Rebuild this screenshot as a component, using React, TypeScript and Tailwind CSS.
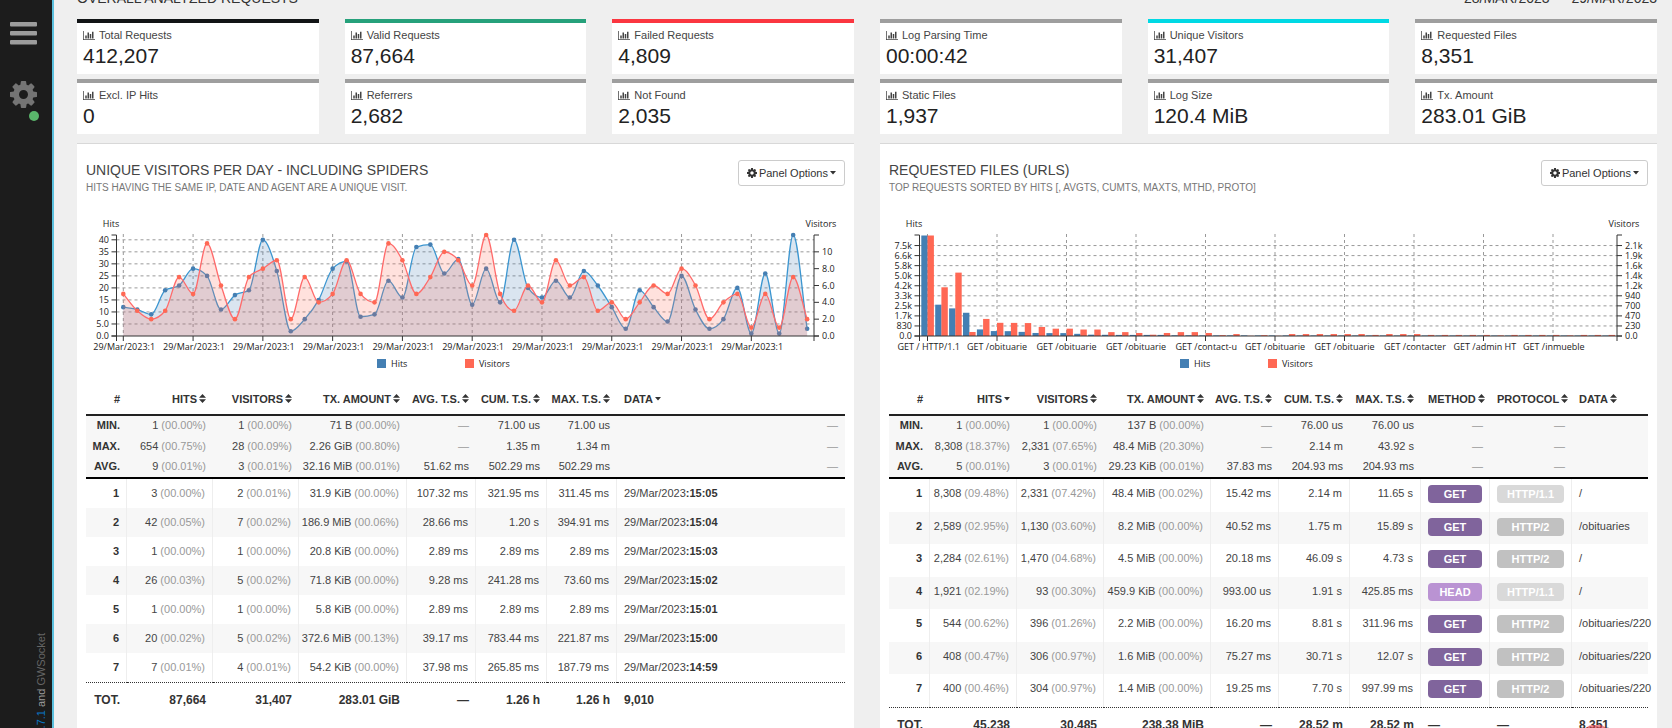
import type { ReactNode } from "react";

const COG =
  "M1152 896q0-106-75-181t-181-75-181 75-75 181 75 181 181 75 181-75 75-181zm512-109v222q0 12-8 23t-20 13l-185 28q-19 54-39 91 35 50 107 138 10 12 10 25t-9 23q-27 37-99 108t-94 71q-12 0-26-9l-138-108q-44 23-91 38-16 136-29 186-7 28-36 28h-222q-14 0-24.5-8.5t-11.5-21.5l-28-184q-49-16-90-37l-141 107q-10 9-25 9-14 0-25-11-126-114-165-168-7-10-7-23 0-12 8-23 15-21 51-66.5t54-70.5q-27-50-41-99l-183-27q-13-2-21-12.5t-8-23.5v-222q0-12 8-23t19-13l186-28q14-46 39-92-40-57-107-138-10-12-10-24 0-10 9-23 26-36 98.5-107.5t94.5-71.5q13 0 26 10l138 107q44-23 91-38 16-136 29-186 7-28 36-28h222q14 0 24.5 8.5t11.5 21.5l28 184q49 16 90 37l142-107q9-9 24-9 13 0 25 10 129 119 165 170 7 8 7 22 0 12-8 23-15 21-51 66.5t-54 70.5q26 50 41 98l183 28q13 2 21 12.5t8 23.5z";

const CogIcon = ({ className }: { className: string }) => (
  <svg viewBox="128 128 1536 1536" className={className} fill="currentColor" aria-hidden="true">
    <path d={COG} />
  </svg>
);

const ChartIcon = () => (
  <svg viewBox="0 0 2048 1792" className="w-3 h-[11px] shrink-0" fill="currentColor" aria-hidden="true">
    <path d="M640 896v512h-256v-512h256zm384-512v1024h-256v-1024h256zm1024 1152v128h-2048v-1536h128v1408h1920zm-640-896v768h-256v-768h256zm384-384v1152h-256v-1152h256z" />
  </svg>
);

const CaretIcon = () => (
  <svg viewBox="0 0 6 4" className="w-[6px] h-1" fill="currentColor" aria-hidden="true">
    <path d="M0 0h6L3 3.5z" />
  </svg>
);

const SortIcon = () => (
  <svg viewBox="0 0 7 9" className="w-[7px] h-[9px]" fill="currentColor" aria-hidden="true">
    <path d="M3.5 0L7 3.8H0zM0 5.2h7L3.5 9z" />
  </svg>
);

const Sidebar = () => (
  <nav className="flex flex-col items-center w-[54px] shrink-0 h-full bg-[#1c1c1c] border-r-2 border-[#5bc0de] overflow-hidden">
    <button type="button" aria-label="Menu" className="mt-[22px] mr-[5px] text-[#9c9c9c]">
      <svg viewBox="0 0 27 23" className="w-[27px] h-[23px]" fill="currentColor">
        <rect width="27" height="4.6" rx="1" />
        <rect y="9" width="27" height="4.6" rx="1" />
        <rect y="18" width="27" height="4.6" rx="1" />
      </svg>
    </button>
    <button type="button" aria-label="Settings" className="relative mt-9 mr-[5px] text-[#747474]">
      <CogIcon className="w-[27px] h-[27px]" />
      <span className="absolute -right-[2px] -bottom-[13px] size-[10px] rounded-full bg-[#5ab66b]" />
    </button>
    <p className="mt-auto -mb-20 ml-[29px] text-[11px] leading-4 text-[#999] whitespace-nowrap [writing-mode:vertical-rl] rotate-180">
      by <a href="#goaccess" className="text-[#0a76c4]">GoAccess v1.7.1</a> and{" "}
      <a href="#gwsocket" className="text-[#666]">GWSocket</a>
    </p>
  </nav>
);

const stats = [
  { label: "Total Requests", value: "412,207", border: "border-[#111416]" },
  { label: "Valid Requests", value: "87,664", border: "border-[#26a17b]" },
  { label: "Failed Requests", value: "4,809", border: "border-[#fb3640]" },
  { label: "Log Parsing Time", value: "00:00:42", border: "border-[#9e9e9e]" },
  { label: "Unique Visitors", value: "31,407", border: "border-[#00d9e4]" },
  { label: "Requested Files", value: "8,351", border: "border-[#9e9e9e]" },
  { label: "Excl. IP Hits", value: "0", border: "border-[#9e9e9e]" },
  { label: "Referrers", value: "2,682", border: "border-[#9e9e9e]" },
  { label: "Not Found", value: "2,035", border: "border-[#9e9e9e]" },
  { label: "Static Files", value: "1,937", border: "border-[#9e9e9e]" },
  { label: "Log Size", value: "120.4 MiB", border: "border-[#9e9e9e]" },
  { label: "Tx. Amount", value: "283.01 GiB", border: "border-[#9e9e9e]" },
];

const StatCard = ({ label, value, border }: { label: string; value: string; border: string }) => (
  <div className={`bg-white border-t-4 px-[6px] pt-1 pb-[6px] ${border}`}>
    <h3 className="flex items-center gap-1 text-[11px] leading-4 text-[#444]">
      <ChartIcon />
      {label}
    </h3>
    <p className="pt-px text-[21px] leading-6 text-[#222]">{value}</p>
  </div>
);

// chart geometry, in viewBox units
const LEFT = 39.5;
const RIGHT = 737;
const TOP = 39;
const BOTTOM = 140;
const BLUE = "#447fb3";
const RED = "#ff6854";

type Tick = [number, string];

interface ChartProps {
  label: string;
  first: number;
  step: number;
  leftTicks: Tick[];
  rightTicks: Tick[];
  xLabels: string[];
  grid: number[];
  children: ReactNode;
}

const Chart = ({ label, first, step, leftTicks, rightTicks, xLabels, grid, children }: ChartProps) => (
  <svg
    viewBox="0 0 777 187"
    role="img"
    aria-label={label}
    className="block w-full h-auto text-[9px] font-['Open_Sans',sans-serif]"
    fill="#222"
  >
    <g stroke="#999" strokeDasharray="3 3">
      {grid.map((y) => (
        <line key={y} x1={LEFT} x2={RIGHT} y1={y} y2={y} />
      ))}
      {xLabels.map((_, i) => (
        <line key={i} x1={first + i * 5 * step} x2={first + i * 5 * step} y1={TOP - 1} y2={BOTTOM} />
      ))}
    </g>
    {children}
    <g stroke="#333" fill="none">
      <path d={`M${LEFT - 5} ${TOP}H${LEFT}V${BOTTOM}H${LEFT - 5}`} />
      <path d={`M${RIGHT + 5} ${TOP}H${RIGHT}V${BOTTOM}H${RIGHT + 5}`} />
      <path d={`M${LEFT} ${BOTTOM + 5}V${BOTTOM}H${RIGHT}V${BOTTOM + 5}`} />
      {leftTicks.map(([y]) => (
        <line key={y} x1={LEFT - 5} x2={LEFT} y1={y} y2={y} />
      ))}
      {rightTicks.map(([y]) => (
        <line key={y} x1={RIGHT} x2={RIGHT + 5} y1={y} y2={y} />
      ))}
      {xLabels.map((_, i) => (
        <line key={i} x1={first + i * 5 * step} x2={first + i * 5 * step} y1={BOTTOM} y2={BOTTOM + 5} />
      ))}
    </g>
    {leftTicks.map(([y, t]) => (
      <text key={y} x="32" y={y + 3} textAnchor="end">{t}</text>
    ))}
    {rightTicks.map(([y, t]) => (
      <text key={y} x={RIGHT + 8} y={y + 3}>{t}</text>
    ))}
    {xLabels.map((t, i) => (
      <text key={i} x={first + i * 5 * step - 30} y="154">{t}</text>
    ))}
    <text x="34" y="31" textAnchor="middle">Hits</text>
    <text x="744" y="31" textAnchor="middle">Visitors</text>
    <rect x="300" y="163" width="9" height="9" fill={BLUE} />
    <text x="314" y="171">Hits</text>
    <rect x="388" y="163" width="9" height="9" fill={RED} />
    <text x="402" y="171">Visitors</text>
  </svg>
);

const dayHits = [
  12, 11, 9, 19, 21, 28, 25, 11, 17, 19, 40, 27, 2, 7, 15, 28, 31, 8, 9, 23, 16, 37, 38, 26, 32,
  13, 28, 14, 40, 20, 16, 23, 16, 27, 21, 12, 3, 19, 12, 6, 25, 11, 3, 7, 20, 1, 26, 1, 42, 3,
];
const dayVisitors = [
  5, 3, 2, 3, 7, 5, 11, 6, 2, 7, 8, 9, 2, 7, 4, 5, 9, 5, 4, 11, 9, 5, 7, 10, 9,
  6, 12, 5, 3, 6, 4, 9, 6, 7, 3, 4, 2, 4, 6, 5, 8, 6, 2, 4, 5, 1, 5, 1, 7, 2,
];

// monotone cubic through the points, same slope rule as d3's curveMonotoneX
const curve = (pts: number[][]) => {
  const d = pts.slice(1).map((p, i) => (p[1] - pts[i][1]) / (p[0] - pts[i][0]));
  const m = pts.map((_, i) => {
    if (i === 0) return d[0];
    if (i === pts.length - 1) return d[i - 1];
    const [a, b] = [d[i - 1], d[i]];
    return (Math.sign(a) + Math.sign(b)) * Math.min(Math.abs(a), Math.abs(b), Math.abs(a + b) / 4);
  });
  let path = `M${pts[0][0]} ${pts[0][1]}`;
  for (let i = 1; i < pts.length; i++) {
    const [x0, y0] = pts[i - 1];
    const [x1, y1] = pts[i];
    const dx = (x1 - x0) / 3;
    path += `C${x0 + dx} ${y0 + dx * m[i - 1]} ${x1 - dx} ${y1 - dx * m[i]} ${x1} ${y1}`;
  }
  return path;
};

const Series = ({ data, max, line, dot }: { data: number[]; max: number; line: string; dot: string }) => {
  const pts = data.map((v, i) => [46.3 + i * 13.956, BOTTOM - (v / max) * (BOTTOM - TOP)]);
  const path = curve(pts);
  return (
    <g>
      <path d={`${path}V${BOTTOM}H46.3Z`} fill={dot} fillOpacity="0.2" />
      <path d={path} fill="none" stroke={line} strokeWidth="1.3" />
      {pts.map(([x, y]) => (
        <circle key={x} cx={x} cy={y} r="2.3" fill={dot} />
      ))}
    </g>
  );
};

const dayY = (v: number) => BOTTOM - (v / 42) * (BOTTOM - TOP);

const VisitorsChart = () => (
  <Chart
    label="Unique visitors per day"
    first={46.3}
    step={13.956}
    grid={[5, 10, 15, 20, 25, 30, 35, 40].map(dayY)}
    leftTicks={["0.0", "5.0", "10", "15", "20", "25", "30", "35", "40"].map((t, i): Tick => [dayY(i * 5), t])}
    rightTicks={["0.0", "2.0", "4.0", "6.0", "8.0", "10"].map((t, i): Tick => [dayY(i * 7), t])}
    xLabels={Array(10).fill("29/Mar/2023:1")}
  >
    <Series data={dayHits} max={42} line="#3c96d0" dot={BLUE} />
    <Series data={dayVisitors} max={12} line="#ff6b6b" dot={RED} />
  </Chart>
);

const fileHits = [
  8308, 2589, 2284, 1921, 544, 408, 400, 340, 250, 240, 240, 180, 110, 100, 90, 90, 90, 90, 60, 60,
  50, 50, 50, 50, 45, 45, 45, 45, 45, 45, 45, 45, 45, 40, 40, 40, 40, 40, 40, 40, 40, 40, 40, 40,
  40, 40, 40, 40, 40, 40,
];
const fileVisitors = [
  2331, 1130, 1470, 93, 396, 306, 304, 300, 210, 170, 170, 150, 150, 90, 90, 70, 30, 70, 90, 90,
  70, 20, 45, 5, 20, 5, 45, 45, 45, 45, 45, 45, 25, 45, 45, 45, 25, 25, 25, 25, 25, 15, 25, 25,
  25, 25, 15, 25, 25, 25,
];

const fileLevel = (i: number) => BOTTOM - i * 10.05;

const FilesChart = () => (
  <Chart
    label="Requested files"
    first={47.5}
    step={13.9}
    grid={[1, 2, 3, 4, 5, 6, 7, 8, 9].map(fileLevel)}
    leftTicks={["0.0", "830", "1.7k", "2.5k", "3.3k", "4.2k", "5.0k", "5.8k", "6.6k", "7.5k"].map((t, i): Tick => [fileLevel(i), t])}
    rightTicks={["0.0", "230", "470", "700", "940", "1.2k", "1.4k", "1.6k", "1.9k", "2.1k"].map((t, i): Tick => [fileLevel(i), t])}
    xLabels={[
      "GET / HTTP/1.1", "GET /obituarie", "GET /obituarie", "GET /obituarie", "GET /contact-u",
      "GET /obituarie", "GET /obituarie", "GET /contacter", "GET /admin HT", "GET /inmueble",
    ]}
  >
    {fileHits.map((v, i) => {
      const x = 47.5 + i * 13.9;
      const h = (v / 8308) * 100.5;
      const r = (fileVisitors[i] / 2331) * 100.5;
      return (
        <g key={i}>
          <rect x={x - 6.2} y={BOTTOM - h} width="6.4" height={h} fill={BLUE} />
          <rect x={x} y={BOTTOM - r} width="6.4" height={r} fill={RED} />
        </g>
      );
    })}
  </Chart>
);

const Value = ({ text }: { text: string }) => {
  if (text === "—") return <span className="text-[#999]">—</span>;
  const at = text.indexOf(" (");
  if (at < 0) return <>{text}</>;
  return (
    <>
      {text.slice(0, at)} <span className="text-[#999]">{text.slice(at + 1)}</span>
    </>
  );
};

const badges: Record<string, string> = {
  GET: "bg-[#80649c]",
  HEAD: "bg-[#ba93d3]",
  "HTTP/1.1": "bg-[#d9d9d9]",
  "HTTP/2": "bg-[#c1c1c1]",
};

const Badge = ({ text }: { text: string }) => (
  <span className={`block mt-px rounded-[4px] text-center text-[11px] leading-[18px] font-bold text-white ${badges[text]}`}>
    {text}
  </span>
);

interface Column {
  name: string;
  width: string;
  left?: boolean;
  sorted?: boolean;
}

interface TableProps {
  columns: Column[];
  summary: string[][];
  rows: string[][];
  totals: string[];
  rowHeight: string;
  marked?: boolean;
}

const DataTable = ({ columns, summary, rows, totals, rowHeight, marked }: TableProps) => (
  <table className="w-full table-fixed border-separate border-spacing-0 text-[11px] leading-[18px] text-[#444] whitespace-nowrap">
    <colgroup>
      {columns.map((c) => (
        <col key={c.name} className={c.width} />
      ))}
    </colgroup>
    <thead>
      <tr>
        {columns.map((c) => (
          <th
            key={c.name}
            scope="col"
            className={`h-[33px] border-b-2 border-[#222] font-bold text-[#333] ${c.left ? "text-left pl-[7px]" : "text-right pr-[7px]"}`}
          >
            {c.name === "#" ? (
              "#"
            ) : (
              <button type="button" className="inline-flex items-center gap-[2px]">
                {c.name}
                {c.sorted ? <CaretIcon /> : <SortIcon />}
              </button>
            )}
          </th>
        ))}
      </tr>
    </thead>
    <tbody className="bg-[#f7f7f7] leading-4">
      {summary.map((row, r) => (
        <tr key={row[0]}>
          {row.map((cell, i) => (
            <td
              key={i}
              className={`h-[21px] pr-[7px] pb-[3px] text-right ${r === 2 ? "border-b-2 border-black" : ""} ${i === 0 ? "font-bold text-[#333]" : ""}`}
            >
              <Value text={cell} />
            </td>
          ))}
        </tr>
      ))}
    </tbody>
    <tbody>
      {rows.map((row) => (
        <tr key={row[0]} className={`even:bg-[#f7f7f7] ${rowHeight}`}>
          {row.map((cell, i) => (
            <td
              key={i}
              className={`pt-[5px] align-top ${i < row.length - 1 ? "border-r border-[#eee]" : ""} ${columns[i].left ? "text-left pl-[7px]" : "text-right"} ${i < row.length - 1 ? "pr-[7px]" : ""} ${i === 0 ? "font-bold text-[#333]" : ""}`}
            >
              {badges[cell] ? (
                <Badge text={cell} />
              ) : cell.startsWith("29/Mar/2023") ? (
                <>
                  29/Mar/2023<b className="text-[#333]">{cell.slice(11)}</b>
                </>
              ) : (
                <Value text={cell} />
              )}
            </td>
          ))}
        </tr>
      ))}
    </tbody>
    <tfoot className="text-xs leading-[18px] font-bold text-[#333]">
      <tr>
        {totals.map((cell, i) => (
          <td
            key={i}
            className={`border-t border-dotted border-[#333] px-[7px] pt-2 pb-2 ${columns[i].left ? "text-left" : "text-right"}`}
          >
            {marked && i === totals.length - 1 ? (
              <span className="relative">
                {cell}
                <span className="absolute left-[6px] top-[7px] w-[22px] h-[14px] rounded-full bg-[#e8414b]/60" />
              </span>
            ) : (
              cell
            )}
          </td>
        ))}
      </tr>
    </tfoot>
  </table>
);

interface PanelProps {
  title: string;
  subtitle: string;
  chart: ReactNode;
  children: ReactNode;
}

const Panel = ({ title, subtitle, chart, children }: PanelProps) => (
  <section className="min-w-0 bg-white border-t border-[#d8d8d8]">
    <div className="flex items-start justify-between px-[9px] pt-4">
      <div>
        <h2 className="text-sm leading-5 text-[#444]">{title}</h2>
        <p className="text-[10px] leading-4 text-[#777]">{subtitle}</p>
      </div>
      <button
        type="button"
        className="flex items-center gap-[2px] h-[26px] px-2 bg-white border border-[#ccc] rounded-[3px] text-[11px] text-[#333]"
      >
        <CogIcon className="w-[10px] h-[10px]" />
        Panel Options
        <CaretIcon />
      </button>
    </div>
    {chart}
    <div className="px-[9px] pb-8">{children}</div>
  </section>
);

const visitorColumns: Column[] = [
  { name: "#", width: "w-[41px]" },
  { name: "HITS", width: "w-[86px]" },
  { name: "VISITORS", width: "w-[86px]" },
  { name: "TX. AMOUNT", width: "w-[108px]" },
  { name: "AVG. T.S.", width: "w-[69px]" },
  { name: "CUM. T.S.", width: "w-[71px]" },
  { name: "MAX. T.S.", width: "w-[70px]" },
  { name: "DATA", width: "w-auto", left: true, sorted: true },
];

const visitorSummary = [
  ["MIN.", "1 (00.00%)", "1 (00.00%)", "71 B (00.00%)", "—", "71.00 us", "71.00 us", "—"],
  ["MAX.", "654 (00.75%)", "28 (00.09%)", "2.26 GiB (00.80%)", "—", "1.35 m", "1.34 m", "—"],
  ["AVG.", "9 (00.01%)", "3 (00.01%)", "32.16 MiB (00.01%)", "51.62 ms", "502.29 ms", "502.29 ms", "—"],
];

const visitorRows = [
  ["1", "3 (00.00%)", "2 (00.01%)", "31.9 KiB (00.00%)", "107.32 ms", "321.95 ms", "311.45 ms", "29/Mar/2023:15:05"],
  ["2", "42 (00.05%)", "7 (00.02%)", "186.9 MiB (00.06%)", "28.66 ms", "1.20 s", "394.91 ms", "29/Mar/2023:15:04"],
  ["3", "1 (00.00%)", "1 (00.00%)", "20.8 KiB (00.00%)", "2.89 ms", "2.89 ms", "2.89 ms", "29/Mar/2023:15:03"],
  ["4", "26 (00.03%)", "5 (00.02%)", "71.8 KiB (00.00%)", "9.28 ms", "241.28 ms", "73.60 ms", "29/Mar/2023:15:02"],
  ["5", "1 (00.00%)", "1 (00.00%)", "5.8 KiB (00.00%)", "2.89 ms", "2.89 ms", "2.89 ms", "29/Mar/2023:15:01"],
  ["6", "20 (00.02%)", "5 (00.02%)", "372.6 MiB (00.13%)", "39.17 ms", "783.44 ms", "221.87 ms", "29/Mar/2023:15:00"],
  ["7", "7 (00.01%)", "4 (00.01%)", "54.2 KiB (00.00%)", "37.98 ms", "265.85 ms", "187.79 ms", "29/Mar/2023:14:59"],
];

const fileColumns: Column[] = [
  { name: "#", width: "w-[41px]" },
  { name: "HITS", width: "w-[87px]", sorted: true },
  { name: "VISITORS", width: "w-[87px]" },
  { name: "TX. AMOUNT", width: "w-[107px]" },
  { name: "AVG. T.S.", width: "w-[68px]" },
  { name: "CUM. T.S.", width: "w-[71px]" },
  { name: "MAX. T.S.", width: "w-[71px]" },
  { name: "METHOD", width: "w-[69px]", left: true },
  { name: "PROTOCOL", width: "w-[82px]", left: true },
  { name: "DATA", width: "w-auto", left: true },
];

const fileSummary = [
  ["MIN.", "1 (00.00%)", "1 (00.00%)", "137 B (00.00%)", "—", "76.00 us", "76.00 us", "—", "—", ""],
  ["MAX.", "8,308 (18.37%)", "2,331 (07.65%)", "48.4 MiB (20.30%)", "—", "2.14 m", "43.92 s", "—", "—", ""],
  ["AVG.", "5 (00.01%)", "3 (00.01%)", "29.23 KiB (00.01%)", "37.83 ms", "204.93 ms", "204.93 ms", "—", "—", ""],
];

const fileRows = [
  ["1", "8,308 (09.48%)", "2,331 (07.42%)", "48.4 MiB (00.02%)", "15.42 ms", "2.14 m", "11.65 s", "GET", "HTTP/1.1", "/"],
  ["2", "2,589 (02.95%)", "1,130 (03.60%)", "8.2 MiB (00.00%)", "40.52 ms", "1.75 m", "15.89 s", "GET", "HTTP/2", "/obituaries"],
  ["3", "2,284 (02.61%)", "1,470 (04.68%)", "4.5 MiB (00.00%)", "20.18 ms", "46.09 s", "4.73 s", "GET", "HTTP/2", "/"],
  ["4", "1,921 (02.19%)", "93 (00.30%)", "459.9 KiB (00.00%)", "993.00 us", "1.91 s", "425.85 ms", "HEAD", "HTTP/1.1", "/"],
  ["5", "544 (00.62%)", "396 (01.26%)", "2.2 MiB (00.00%)", "16.20 ms", "8.81 s", "311.96 ms", "GET", "HTTP/2", "/obituaries/220"],
  ["6", "408 (00.47%)", "306 (00.97%)", "1.6 MiB (00.00%)", "75.27 ms", "30.71 s", "12.07 s", "GET", "HTTP/2", "/obituaries/220"],
  ["7", "400 (00.46%)", "304 (00.97%)", "1.4 MiB (00.00%)", "19.25 ms", "7.70 s", "997.99 ms", "GET", "HTTP/2", "/obituaries/220"],
];

export default function App() {
  return (
    <div className="flex h-screen overflow-hidden bg-[#efefef] font-['Liberation_Sans',Arial,sans-serif]">
      <Sidebar />
      <main className="flex-1 min-w-0 pl-[23px] pr-[15px]">
        <header className="flex justify-between -mt-3 mb-[11px] text-sm leading-5 text-[#333]">
          <h1>OVERALL ANALYZED REQUESTS</h1>
          <p>28/MAR/2023 — 29/MAR/2023</p>
        </header>
        <div className="grid grid-cols-6 gap-x-[26px] gap-y-[5px]">
          {stats.map((s) => (
            <StatCard key={s.label} {...s} />
          ))}
        </div>
        <div className="grid grid-cols-2 gap-x-[26px] mt-[9px]">
          <Panel
            title="UNIQUE VISITORS PER DAY - INCLUDING SPIDERS"
            subtitle="HITS HAVING THE SAME IP, DATE AND AGENT ARE A UNIQUE VISIT."
            chart={<VisitorsChart />}
          >
            <DataTable
              columns={visitorColumns}
              summary={visitorSummary}
              rows={visitorRows}
              totals={["TOT.", "87,664", "31,407", "283.01 GiB", "—", "1.26 h", "1.26 h", "9,010"]}
              rowHeight="h-[29px]"
            />
          </Panel>
          <Panel
            title="REQUESTED FILES (URLS)"
            subtitle="TOP REQUESTS SORTED BY HITS [, AVGTS, CUMTS, MAXTS, MTHD, PROTO]"
            chart={<FilesChart />}
          >
            <DataTable
              columns={fileColumns}
              summary={fileSummary}
              rows={fileRows}
              totals={["TOT.", "45,238", "30,485", "238.38 MiB", "—", "28.52 m", "28.52 m", "—", "—", "8,351"]}
              rowHeight="odd:h-[33px] even:h-8"
              marked
            />
          </Panel>
        </div>
      </main>
    </div>
  );
}
